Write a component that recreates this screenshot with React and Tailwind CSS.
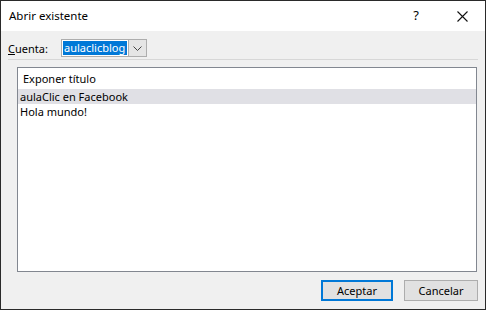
import React from 'react';

function App() {
  const rows = ['aulaClic en Facebook', 'Hola mundo!'];

  return (
    <div className="w-[486px] h-[310px] border border-[#2a2a2a] bg-[#f0f0f0] flex flex-col text-[11px] text-black" style={{ fontFamily: '"Noto Sans", "Liberation Sans", sans-serif' }}>
      {/* Title bar */}
      <div className="h-[30px] bg-white flex items-center pl-2 shrink-0">
        <div className="flex-1 leading-none text-[11.5px]">Abrir existente</div>
        <div className="w-[46px] text-center text-[13px]">?</div>
        <div className="w-[46px] flex justify-center">
          <svg width="11" height="11" viewBox="0 0 11 11" stroke="#111" strokeWidth="1.1">
            <path d="M0.5 0.5 L10.5 10.5 M10.5 0.5 L0.5 10.5" />
          </svg>
        </div>
      </div>

      {/* Account row */}
      <div className="flex items-center pt-2 px-[7px]">
        <div className="w-[53px] leading-none"><span className="underline">C</span>uenta:</div>
        <div className="h-[18px] w-[86px] border border-[#adadad] bg-white flex">
          <div className="flex-1 p-px">
            <div className="h-full bg-[#0078d7] text-white leading-[14px] px-px">aulaclicblog</div>
          </div>
          <div className="w-[18px] bg-[#e5e5e5] border-l border-[#adadad] flex items-center justify-center">
            <svg width="9" height="5" viewBox="0 0 9 5" fill="none" stroke="#444" strokeWidth="1">
              <path d="M0.5 0.5 L4.5 4.5 L8.5 0.5" />
            </svg>
          </div>
        </div>
      </div>

      {/* Separator */}
      <div className="mx-[7px] mt-[2px] h-px bg-[#d7d7d7]" />

      {/* List */}
      <div className="mt-[7px] ml-[16px] mr-[8px] h-[205px] border border-[#828790] bg-white flex flex-col">
        <div className="h-[21px] flex items-center pl-[5px] leading-none">Exponer título</div>
        {rows.map((r, i) => (
          <div key={r} className={`h-[15px] flex items-center pl-[2px] leading-none ${i === 0 ? 'bg-[#e0e0e5]' : ''}`}>{r}</div>
        ))}
      </div>

      {/* Buttons */}
      <div className="flex justify-end gap-[11px] mt-[8px] mr-[7px]">
        <button className="w-[72px] h-[21px] border-2 border-[#0078d7] bg-[#e1e1e1] leading-none">Aceptar</button>
        <button className="w-[74px] h-[21px] border border-[#adadad] bg-[#e1e1e1] leading-none">Cancelar</button>
      </div>
    </div>
  );
}

export default App;
